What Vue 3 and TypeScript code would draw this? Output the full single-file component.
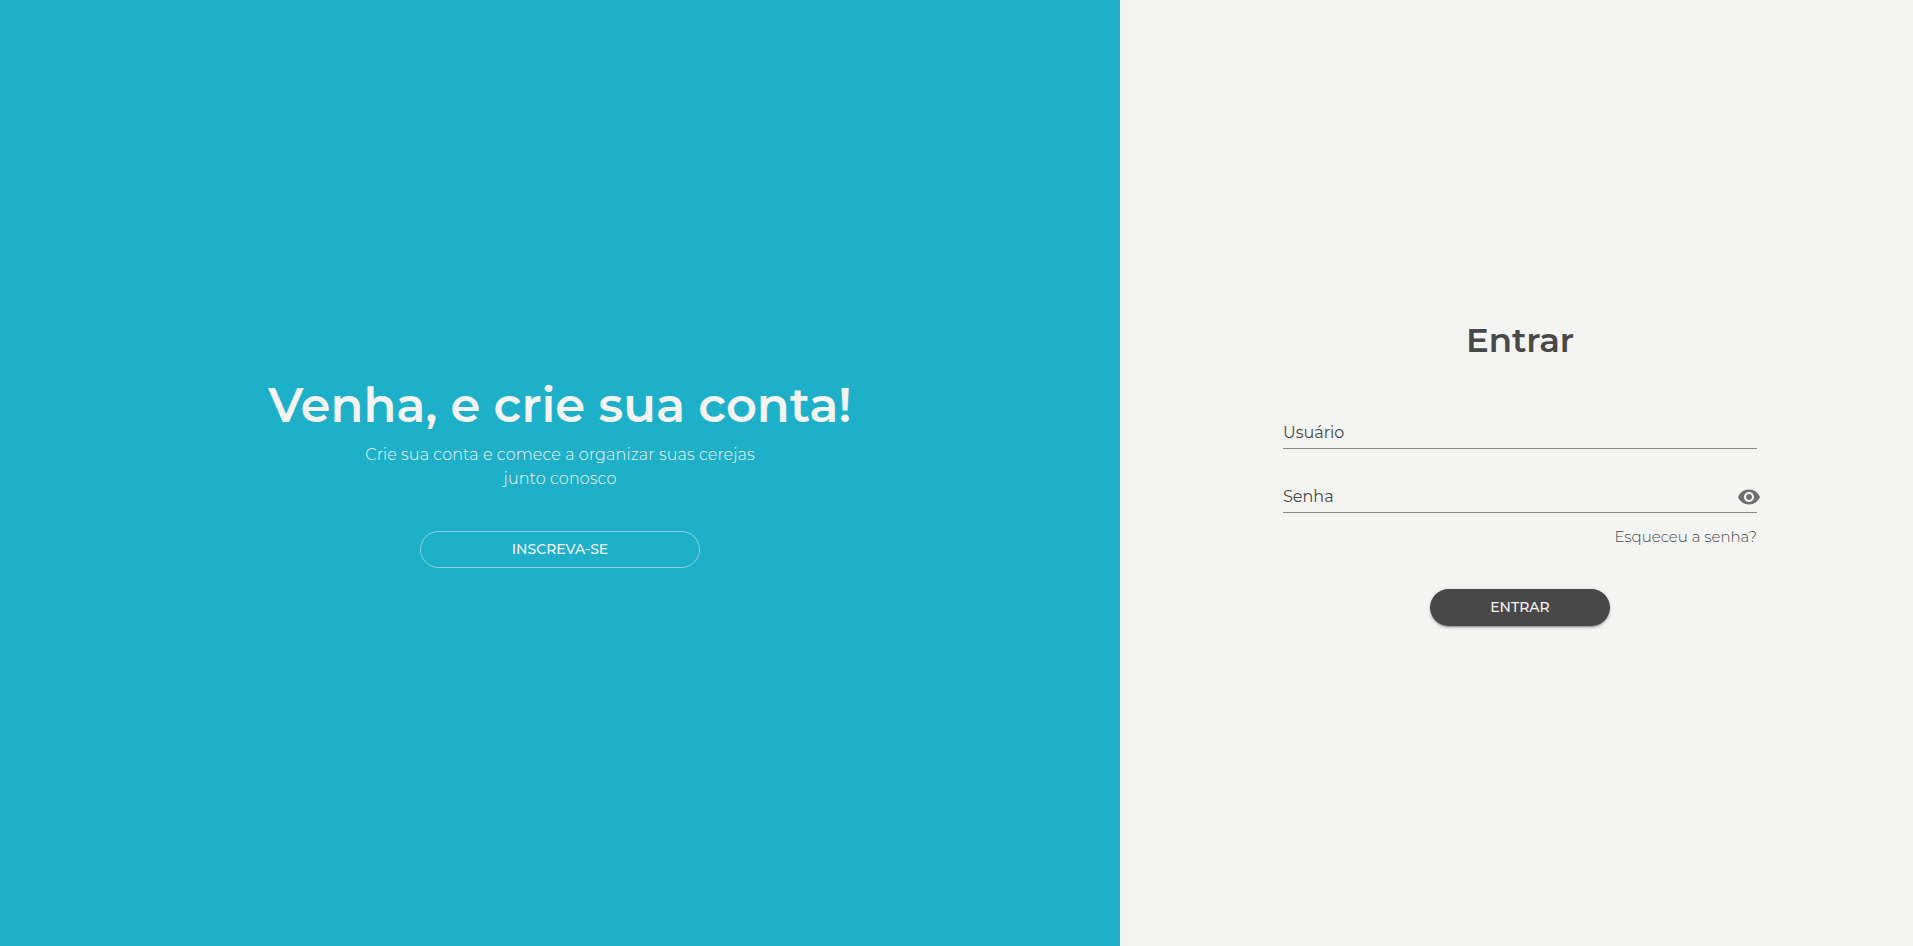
<script setup lang="ts">
import { ref } from 'vue'

const user = ref('')
const password = ref('')
const visible = ref(false)
</script>

<template>
  <main class="page">
    <section class="invite">
      <h1 class="headline">Venha, e crie sua conta!</h1>
      <p class="lead">Crie sua conta e comece a organizar suas cerejas junto conosco</p>
      <button class="button outline" type="button">INSCREVA-SE</button>
    </section>
    <section class="login">
      <form class="form" @submit.prevent>
        <h2 class="title">Entrar</h2>
        <div class="field">
          <span v-if="!user" class="label">Usuário</span>
          <input v-model="user" type="text" aria-label="Usuário" />
        </div>
        <div class="field">
          <span v-if="!password" class="label">Senha</span>
          <input v-model="password" :type="visible ? 'text' : 'password'" aria-label="Senha" />
          <button class="eye" type="button" aria-label="Mostrar senha" @click="visible = !visible">
            <svg viewBox="0 0 24 24" width="24" height="24">
              <path d="M12 4.5C7 4.5 2.73 7.61 1 12c1.73 4.39 6 7.5 11 7.5s9.27-3.11 11-7.5c-1.73-4.39-6-7.5-11-7.5zM12 17c-2.76 0-5-2.24-5-5s2.24-5 5-5 5 2.24 5 5-2.24 5-5 5zm0-8c-1.66 0-3 1.34-3 3s1.34 3 3 3 3-1.34 3-3-1.34-3-3-3z" />
            </svg>
          </button>
        </div>
        <a class="forgot" href="#">Esqueceu a senha?</a>
        <button class="button solid" type="submit">ENTRAR</button>
      </form>
    </section>
  </main>
</template>

<style>
body {
  margin: 0;
}
</style>

<style scoped>
.page {
  display: flex;
  height: 100vh;
  overflow: hidden;
  font-family: Montserrat, Inter, "Open Sans", sans-serif;
  background: #f4f4f2;
}
.invite {
  box-sizing: border-box;
  width: 1120px;
  padding-top: 375px;
  display: flex;
  flex-direction: column;
  align-items: center;
  background: #1eb0c9;
  color: #f4f4f2;
}
.headline {
  margin: 0;
  font-size: 48px;
  line-height: 60px;
  letter-spacing: 0.02px;
  font-weight: 600;
}
.lead {
  width: 420px;
  margin: 8px 0 0;
  font-size: 16px;
  line-height: 24px;
  letter-spacing: 0.11px;
  font-weight: 300;
  text-align: center;
}
.button {
  box-sizing: border-box;
  height: 37px;
  padding: 0 0 1px;
  border-radius: 19px;
  font-family: inherit;
  font-size: 14px;
  line-height: 24px;
  font-weight: 500;
}
.outline {
  width: 280px;
  margin-top: 40px;
  border: 1px solid rgba(244, 244, 242, 0.5);
  background: transparent;
  color: #f4f4f2;
}
.login {
  flex: 1;
  display: flex;
  justify-content: center;
  padding: 320px 0 0 7px;
}
.form {
  width: 474px;
  display: flex;
  flex-direction: column;
  align-items: center;
}
.title {
  margin: 0 0 65px;
  font-size: 34px;
  line-height: 40px;
  font-weight: 600;
  color: #484848;
}
.field {
  position: relative;
  box-sizing: border-box;
  width: 100%;
  height: 24px;
  margin-bottom: 40px;
  border-bottom: 1px solid #8b8b8a;
}
.field input {
  display: block;
  width: 100%;
  height: 100%;
  box-sizing: border-box;
  padding: 0 34px 0 0;
  border: 0;
  outline: 0;
  background: transparent;
  font: inherit;
}
.label {
  position: absolute;
  left: 0;
  top: -4px;
  font-size: 16px;
  line-height: 24px;
  color: #484848;
  pointer-events: none;
}
.eye {
  position: absolute;
  right: -4px;
  top: -4px;
  padding: 0;
  border: 0;
  background: none;
  line-height: 0;
}
.eye svg {
  fill: #6f6f6f;
}
.forgot {
  align-self: flex-end;
  margin-top: -28px;
  font-size: 15px;
  line-height: 24px;
  font-weight: 300;
  color: #484848;
  text-decoration: none;
}
.solid {
  width: 180px;
  margin-top: 40px;
  border: 0;
  background: #484848;
  color: #f4f4f2;
  box-shadow: 0 3px 1px -2px rgba(0, 0, 0, 0.2), 0 2px 2px rgba(0, 0, 0, 0.14), 0 1px 5px rgba(0, 0, 0, 0.12);
}
</style>
